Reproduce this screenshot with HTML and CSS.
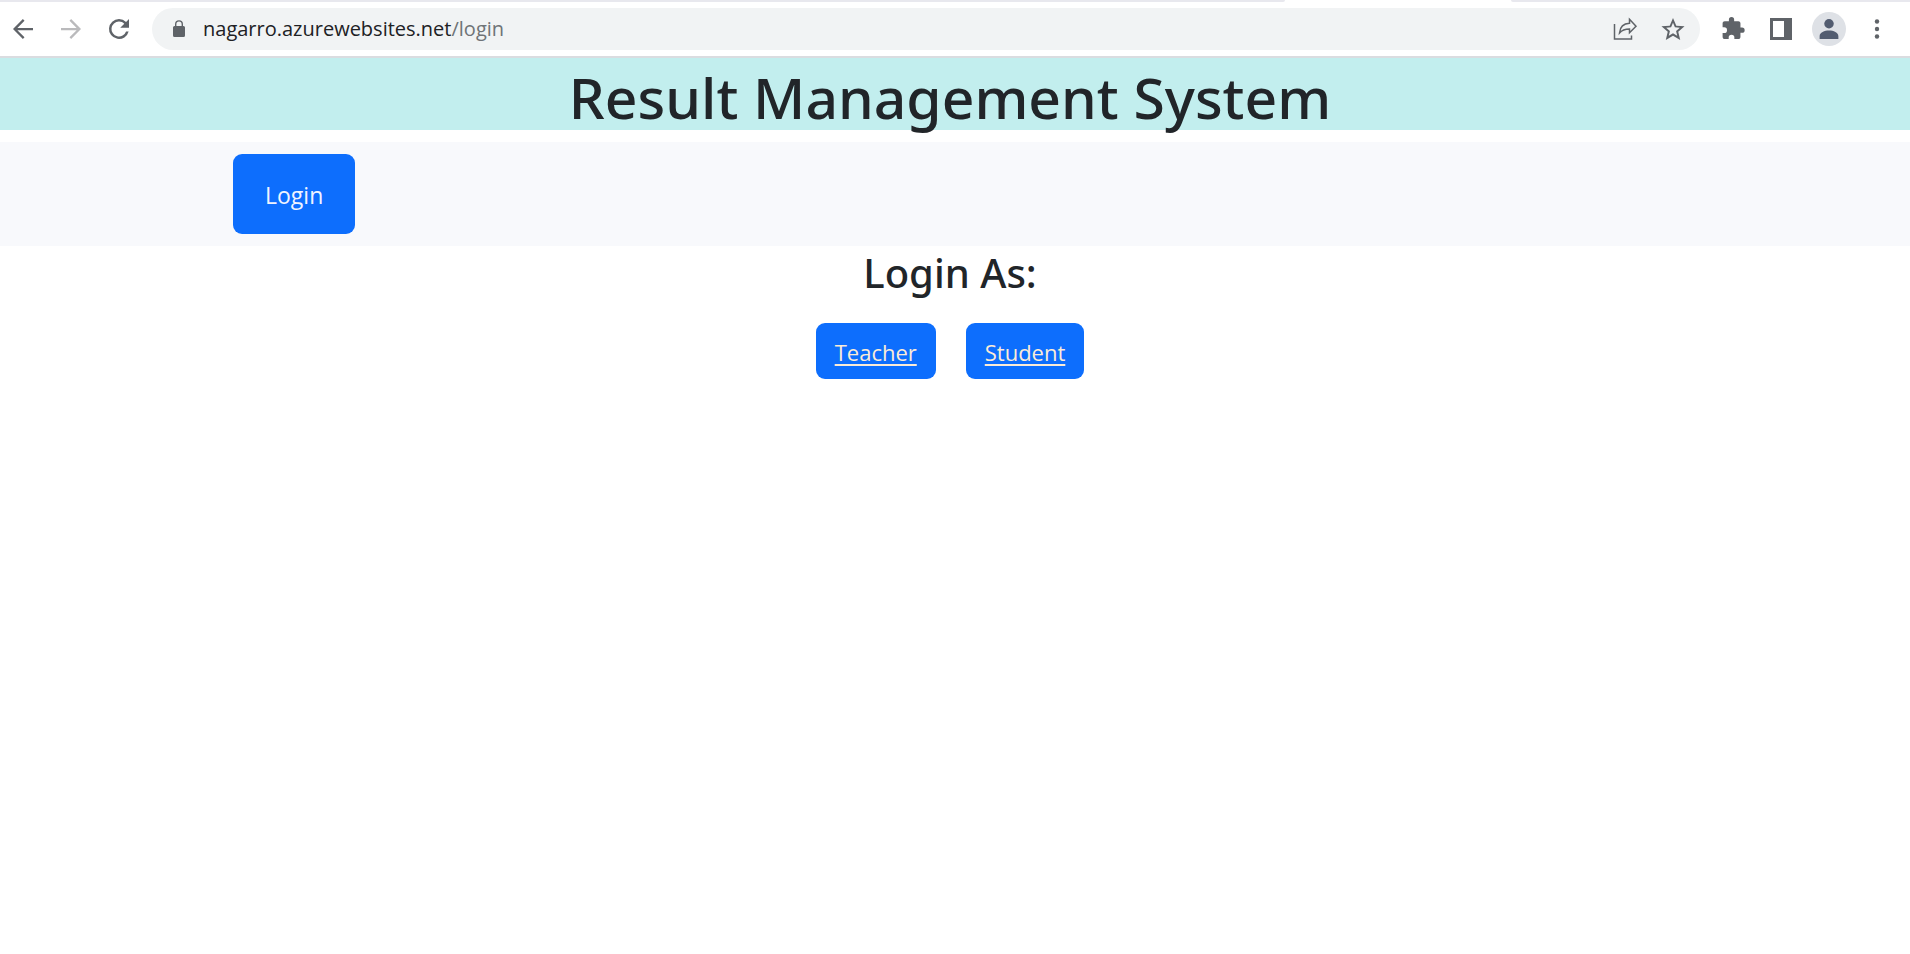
FILE: index.html
```html
<!DOCTYPE html>
<html lang="en">
<head>
<meta charset="utf-8">
<title>Result Management System</title>
<link rel="stylesheet" href="styles.css">
</head>
<body>
<div class="browser">
  <div class="tabstrip"><div class="tab-left"></div><div class="tab-right"></div></div>
  <div class="toolbar">
    <button class="tool" aria-label="Back"><svg viewBox="0 0 24 24"><path d="M20 11.1H7.5l5.7-5.7L11.9 4 4 12l7.9 8 1.3-1.4-5.7-5.7H20z"/></svg></button>
    <button class="tool tool-off" aria-label="Forward"><svg viewBox="0 0 24 24"><path d="M4 11.1h12.500l-5.700-5.700L12.100 4 20 12l-7.900 8-1.300-1.400 5.700-5.700H4z"/></svg></button>
    <button class="tool" aria-label="Reload"><svg viewBox="0 0 24 24"><path d="M17.65 6.35A7.96 7.96 0 0 0 12 4a8 8 0 1 0 7.73 10h-2.08A6 6 0 1 1 12 6c1.66 0 3.14.69 4.22 1.78L13 11h7V4z"/></svg></button>
    <div class="omnibox">
      <button class="lock" aria-label="Site information"><svg viewBox="0 0 20 20"><path d="M14.500 7H14V5.200a4 4 0 0 0-8 0V7h-.5A1.500 1.500 0 0 0 4 8.500v8A1.500 1.500 0 0 0 5.500 18h9a1.500 1.500 0 0 0 1.500-1.500v-8A1.500 1.500 0 0 0 14.500 7zM7.400 5.200a2.600 2.600 0 0 1 5.200 0V7H7.400z"/></svg></button>
      <div class="url" role="textbox" aria-label="Address" contenteditable="true" spellcheck="false">nagarro.azurewebsites.net<span class="path">/login</span></div>
      <button class="tool" aria-label="Share"><svg class="line" viewBox="0 0 30 30"><path d="M4.500 10v15h17V21.500"/><path d="M19.500 5.300l6.500 7-6.500 6.500v-3.800c-4.500 0-7.500 1-10 4 .5-5.500 4-9.500 10-9.700z"/></svg></button>
      <button class="tool" aria-label="Bookmark"><svg viewBox="0 0 24 24"><path fill-rule="evenodd" d="M20.800 9.600l-6.300-.55L12 3.200 9.500 9.050l-6.300.55 4.800 4.150L6.500 20 12 16.700l5.500 3.300-1.500-6.250zM12 14.800l-3.200 1.950.85-3.650-2.850-2.450 3.750-.3L12 6.900l1.450 3.450 3.750.3-2.850 2.450.85 3.650z" transform="translate(-.6 -.2) scale(1.050)"/></svg></button>
    </div>
    <button class="tool" aria-label="Extensions"><svg viewBox="0 0 24 24"><path d="M20.500 11H19V7c0-1.100-.9-2-2-2h-4V3.500a2.500 2.500 0 0 0-5 0V5H4c-1.100 0-2 .9-2 2v3.800h1.500a2.700 2.700 0 0 1 0 5.400H2V20c0 1.100.9 2 2 2h3.800v-1.500a2.700 2.700 0 0 1 5.400 0V22H17c1.100 0 2-.9 2-2v-4h1.500a2.500 2.500 0 0 0 0-5z" transform="translate(2 1.600) scale(.84)"/></svg></button>
    <button class="tool" aria-label="Side panel"><svg viewBox="0 0 30 30"><path fill-rule="evenodd" d="M4 4h22v22H4zM7 7v16h11V7z"/></svg></button>
    <button class="tool profile" aria-label="Profile"><svg viewBox="0 0 24 24"><circle cx="12" cy="7.800" r="3.800"/><path d="M12 13.200c-3.600 0-7.500 1.600-7.500 4.500v2.200h15v-2.200c0-2.900-3.900-4.500-7.500-4.500z"/></svg></button>
    <button class="tool" aria-label="Menu"><svg viewBox="0 0 30 30"><circle cx="15" cy="7.500" r="2.200"/><circle cx="15" cy="15" r="2.200"/><circle cx="15" cy="22.500" r="2.200"/></svg></button>
  </div>
</div>
<header class="banner"><h1>Result Management System</h1></header>
<nav class="nav"><button class="btn btn-login">Login</button></nav>
<main class="main">
  <h2>Login As:</h2>
  <div class="choices">
    <a class="btn btn-role" href="#teacher">Teacher</a>
    <a class="btn btn-role" href="#student">Student</a>
  </div>
</main>
</body>
</html>
```
FILE: styles.css
```css
* { box-sizing: border-box; }
body {
  margin: 0;
  background: #fff;
  color: #212529;
  font-family: "Segoe UI", "Open Sans", sans-serif;
}
button { border: 0; padding: 0; background: none; font: inherit; cursor: pointer; }
h1, h2 { margin: 0; font-family: "Segoe UI", "Noto Sans", sans-serif; font-weight: 500; text-align: center; }

.browser { border-bottom: 2px solid #dadce0; }
.tabstrip { display: flex; justify-content: space-between; height: 2px; }
.tab-left, .tab-right { background: #e8e8ee; }
.tab-left { width: 67.3%; border-bottom-right-radius: 2px; }
.tab-right { width: 20.9%; border-bottom-left-radius: 2px; }
.toolbar { display: flex; align-items: center; gap: 18px; padding: 6px 18px 6px 8px; }
.tool { flex: none; width: 30px; height: 30px; color: #5f6368; }
.tool svg, .lock svg { display: block; width: 100%; height: 100%; fill: currentColor; }
.tool svg.line { fill: none; stroke: currentColor; stroke-width: 1.5; }
.tool-off { color: #bababc; }
.profile { width: 34px; height: 34px; margin: 0 -2px; padding: 2px; border-radius: 50%; background: #dee1e6; color: #525c70; }
.omnibox {
  flex: 1;
  display: flex;
  align-items: center;
  gap: 18px;
  height: 42px;
  padding: 0 12px 0 17px;
  border-radius: 21px;
  background: #f1f3f4;
}
.lock { width: 20px; height: 20px; color: #5f6368; }
.url { flex: 1; margin-left: -4px; font-size: 20px; line-height: 30px; color: #202124; outline: 0; }
.path { color: #6f7377; }

.banner { height: 72px; padding-right: 10px; background: #c2eeee; }
.banner h1 { font-size: 57px; line-height: 78px; }
.nav { margin-top: 12px; padding: 12px 12.200%; background: #f8f9fc; }
.btn { display: block; border-radius: 9px; background: #0d6efd; color: #fff; font-size: 23px; }
.btn-login { padding: 23px 32px 21px; line-height: 36px; color: #f0f4ff; }
.main { padding-right: 10px; }
.main h2 { font-size: 40px; line-height: 54px; }
.choices { display: flex; justify-content: center; gap: 30px; margin-top: 23px; }
.btn-role { padding: 11px 19px 9px; font-size: 22px; line-height: 36px; color: #faebd7; text-underline-offset: 3px; text-decoration-thickness: 2px; }
```
